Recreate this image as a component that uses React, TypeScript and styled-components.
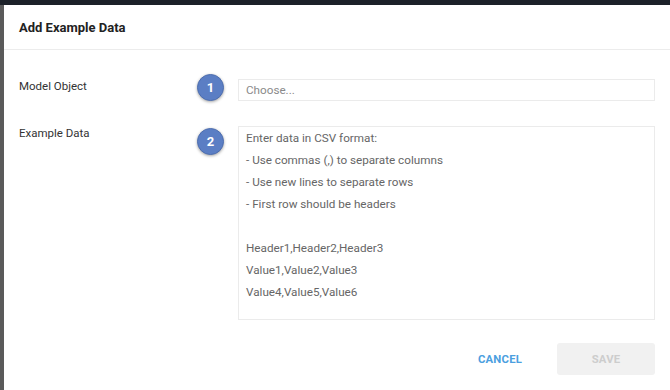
import React from 'react';
import styled, { createGlobalStyle } from 'styled-components';

const GlobalStyle = createGlobalStyle`
  html, body {
    margin: 0;
    padding: 0;
    background: #5a5a5a;
    font-family: Roboto, "Liberation Sans", Arial, sans-serif;
    overflow: hidden;
  }
`;

const TopBar = styled.div`
  height: 5px;
  background: #1c2129;
`;

const Dialog = styled.div`
  margin-left: 4px;
  height: 385px;
  background: #fff;
  display: flex;
  flex-direction: column;
`;

const Header = styled.div`
  height: 44px;
  display: flex;
  align-items: center;
  padding: 0 15px;
  border-bottom: 1px solid #ececec;
`;

const Title = styled.h2`
  margin: 0;
  font-size: 13px;
  font-weight: 700;
  color: #222;
`;

const Body = styled.div`
  padding: 29px 15px 0 15px;
  display: flex;
  flex-direction: column;
  gap: 25px;
`;

const Row = styled.div`
  display: grid;
  grid-template-columns: 178px 27px 1fr;
  align-items: start;
`;

const Label = styled.div`
  font-size: 11.5px;
  line-height: 14px;
  color: #333;
`;

const Badge = styled.div<{ $offset: number }>`
  width: 27px;
  height: 27px;
  margin-top: ${({ $offset }) => $offset}px;
  border-radius: 50%;
  background: #5b7ec4;
  border: 1px solid #4d6eb0;
  box-sizing: border-box;
  box-shadow: 0 1px 3px rgba(0, 0, 0, 0.35);
  color: #fff;
  font-size: 13px;
  font-weight: 700;
  display: flex;
  align-items: center;
  justify-content: center;
`;

const Field = styled.div`
  margin-left: 14px;
  border: 1px solid #ebebeb;
  box-sizing: border-box;
  padding: 0 7px;
  font-size: 11.7px;
`;

const Select = styled(Field)`
  height: 22px;
  display: flex;
  align-items: center;
  color: #8a8a8a;
`;

const TextArea = styled(Field)`
  height: 194px;
  line-height: 22px;
  color: #666;
  white-space: pre;
`;

const Footer = styled.div`
  display: flex;
  justify-content: flex-end;
  gap: 8px;
  padding: 23px 15px 0 15px;
`;

const Button = styled.button<{ $variant: 'text' | 'filled' }>`
  width: 98px;
  height: 32px;
  border: none;
  border-radius: 3px;
  font-family: inherit;
  font-size: 11.3px;
  font-weight: 700;
  letter-spacing: 0.2px;
  background: ${({ $variant }) => ($variant === 'filled' ? '#f1f1f1' : 'transparent')};
  color: ${({ $variant }) => ($variant === 'filled' ? '#cdcdcd' : '#4c9fe0')};
  cursor: pointer;
`;

const exampleText = `Enter data in CSV format:
- Use commas (,) to separate columns
- Use new lines to separate rows
- First row should be headers

Header1,Header2,Header3
Value1,Value2,Value3
Value4,Value5,Value6`;

const App: React.FC = () => {
  return (
    <>
      <GlobalStyle />
      <TopBar />
      <Dialog>
        <Header>
          <Title>Add Example Data</Title>
        </Header>
        <Body>
          <Row>
            <Label>Model Object</Label>
            <Badge $offset={-5}>1</Badge>
            <Select>Choose...</Select>
          </Row>
          <Row>
            <Label>Example Data</Label>
            <Badge $offset={2}>2</Badge>
            <TextArea>{exampleText}</TextArea>
          </Row>
        </Body>
        <Footer>
          <Button $variant="text">CANCEL</Button>
          <Button $variant="filled" disabled>SAVE</Button>
        </Footer>
      </Dialog>
    </>
  );
};

export default App;
